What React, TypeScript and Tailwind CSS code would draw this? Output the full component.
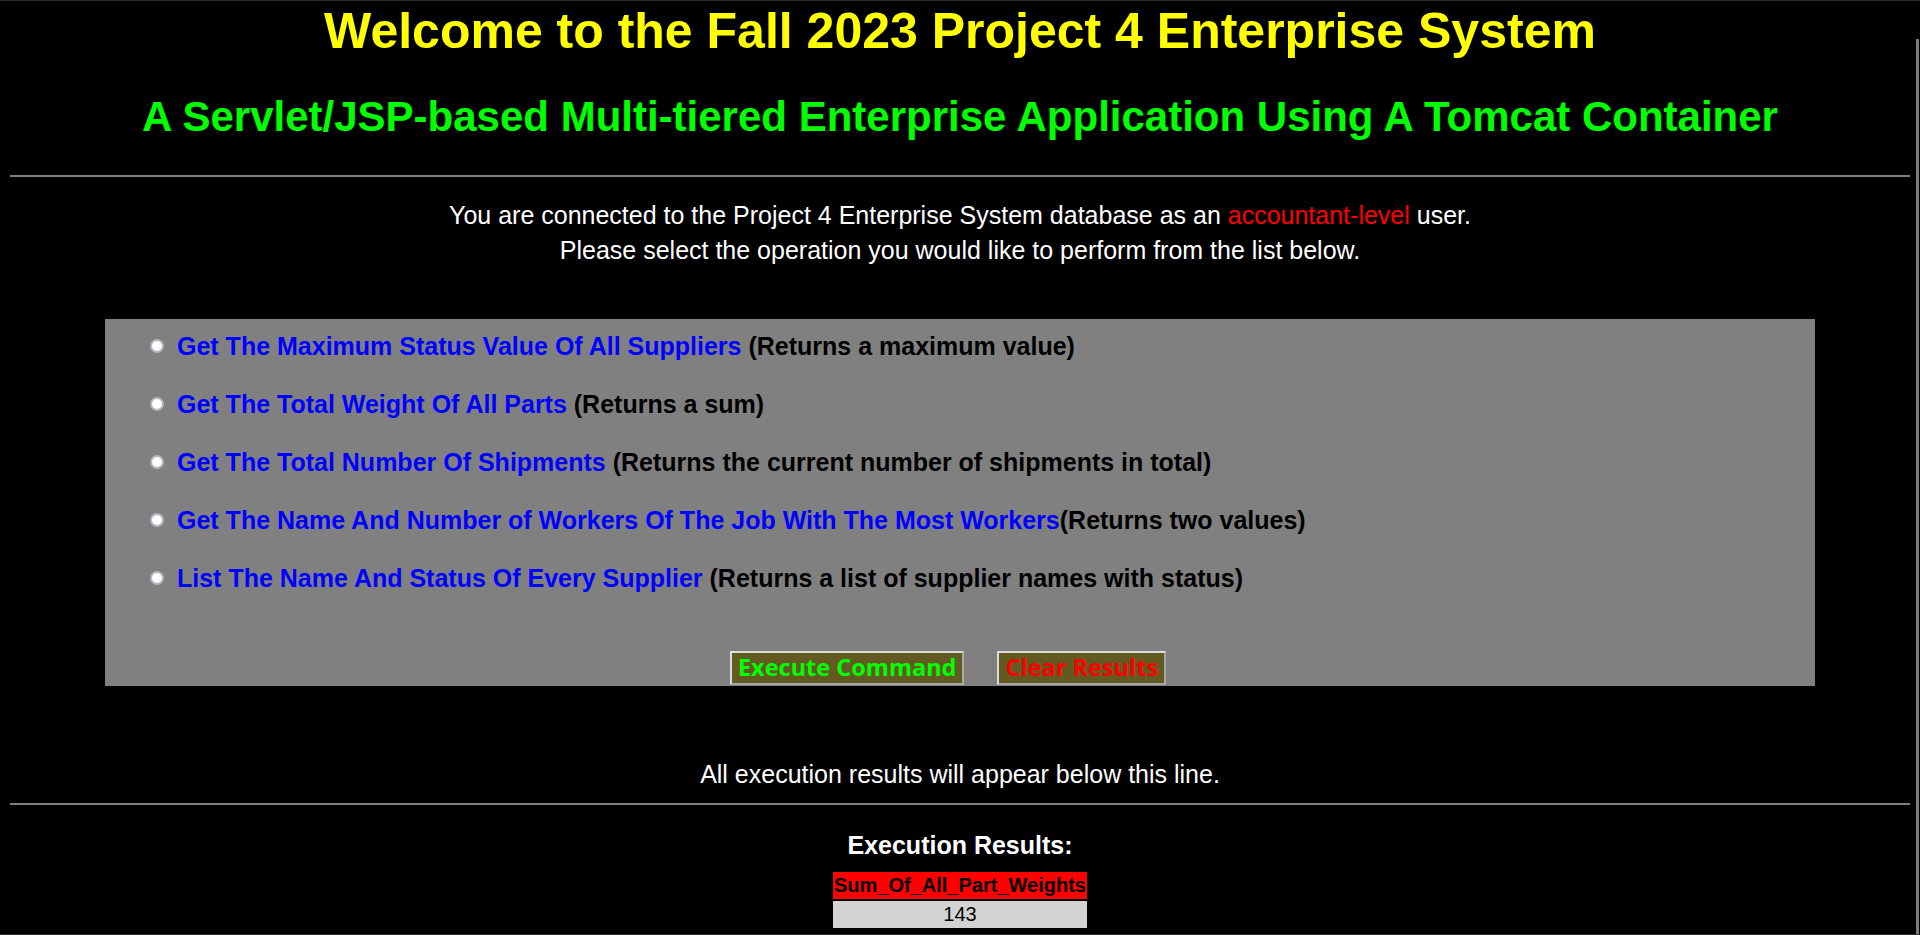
import React from 'react';

const SANS = { fontFamily: '"Liberation Sans", Arial, sans-serif' };
const BTN_FONT = { fontFamily: '"Open Sans", "DejaVu Sans", sans-serif' };

const OPTIONS: { label: string; note: string; gap?: boolean }[] = [
  { label: 'Get The Maximum Status Value Of All Suppliers', note: '(Returns a maximum value)', gap: true },
  { label: 'Get The Total Weight Of All Parts', note: '(Returns a sum)', gap: true },
  { label: 'Get The Total Number Of Shipments', note: '(Returns the current number of shipments in total)', gap: true },
  { label: 'Get The Name And Number of Workers Of The Job With The Most Workers', note: '(Returns two values)', gap: false },
  { label: 'List The Name And Status Of Every Supplier', note: '(Returns a list of supplier names with status)', gap: true },
];

function Radio() {
  return (
    <span className="inline-flex items-center justify-center w-[14px] h-[14px] rounded-full bg-[#b4b4c0] mr-[13px] shrink-0">
      <span className="w-[10px] h-[10px] rounded-full bg-white" />
    </span>
  );
}

export default function App() {
  return (
    <div className="relative h-[935px] overflow-hidden bg-black border-t border-b border-[#2e2e2e] text-center" style={SANS}>
      <h1 className="m-0 text-[50px] leading-[60px] font-bold text-[#ffff00]">
        Welcome to the Fall 2023 Project 4 Enterprise System
      </h1>
      <h2 className="mt-[26px] text-[42px] leading-[60px] font-bold text-[#00ff00]">
        A Servlet/JSP-based Multi-tiered Enterprise Application Using A Tomcat Container
      </h2>
      <div className="mt-[28px] mx-[10px] h-[2px] bg-[#808080]" />

      <div className="mt-[21px] text-[25px] leading-[35px] text-white">
        <div>
          You are connected to the Project 4 Enterprise System database as an{' '}
          <span className="text-[#ff0000]">accountant-level</span> user.
        </div>
        <div>Please select the operation you would like to perform from the list below.</div>
      </div>

      <form className="mt-[51px] mx-auto w-[1710px] h-[367px] bg-[#808080] flex flex-col pt-[13px] pl-[45px]">
        <div className="flex flex-col gap-[30px]">
          {OPTIONS.map((o) => (
            <label key={o.label} className="flex items-center h-[28px] text-[25px] leading-[28px] font-bold text-left">
              <Radio />
              <span className="text-[#0000ff]">{o.label}</span>
              <span className="text-black whitespace-pre">{o.gap ? ' ' : ''}{o.note}</span>
            </label>
          ))}
        </div>
        <div className="mt-auto mb-[1px] flex justify-center gap-[33px] -ml-[45px] pr-[24px]">
          <button
            type="button"
            className="h-[34px] px-[6px] bg-[#635a22] border-2 border-t-[#dcdcdc] border-l-[#dcdcdc] border-r-[#a8a8a8] border-b-[#a8a8a8] text-[#00ff00] text-[23.5px] font-bold leading-none"
            style={BTN_FONT}
          >
            Execute Command
          </button>
          <button
            type="button"
            className="h-[34px] px-[6px] bg-[#635a22] border-2 border-t-[#dcdcdc] border-l-[#dcdcdc] border-r-[#a8a8a8] border-b-[#a8a8a8] text-[#ff0000] text-[23.5px] font-bold leading-none"
            style={BTN_FONT}
          >
            Clear Results
          </button>
        </div>
      </form>

      <p className="mt-[73px] text-[25px] leading-[30px] text-white">All execution results will appear below this line.</p>
      <div className="mt-[14px] mx-[10px] h-[2px] bg-[#808080]" />

      <h3 className="mt-[25px] text-[25px] leading-[30px] font-bold text-white">Execution Results:</h3>
      <div className="mt-[12px] mx-auto w-[254px] flex flex-col gap-[2px] text-[20px]">
        <div className="h-[27px] leading-[27px] bg-[#ff0000] text-black font-bold">Sum_Of_All_Part_Weights</div>
        <div className="h-[27px] leading-[27px] bg-[#d3d3d3] text-black">143</div>
      </div>

      <div className="absolute right-[1px] top-[38px] bottom-0 w-[3px] bg-[#7c7c7c]" />
    </div>
  );
}
